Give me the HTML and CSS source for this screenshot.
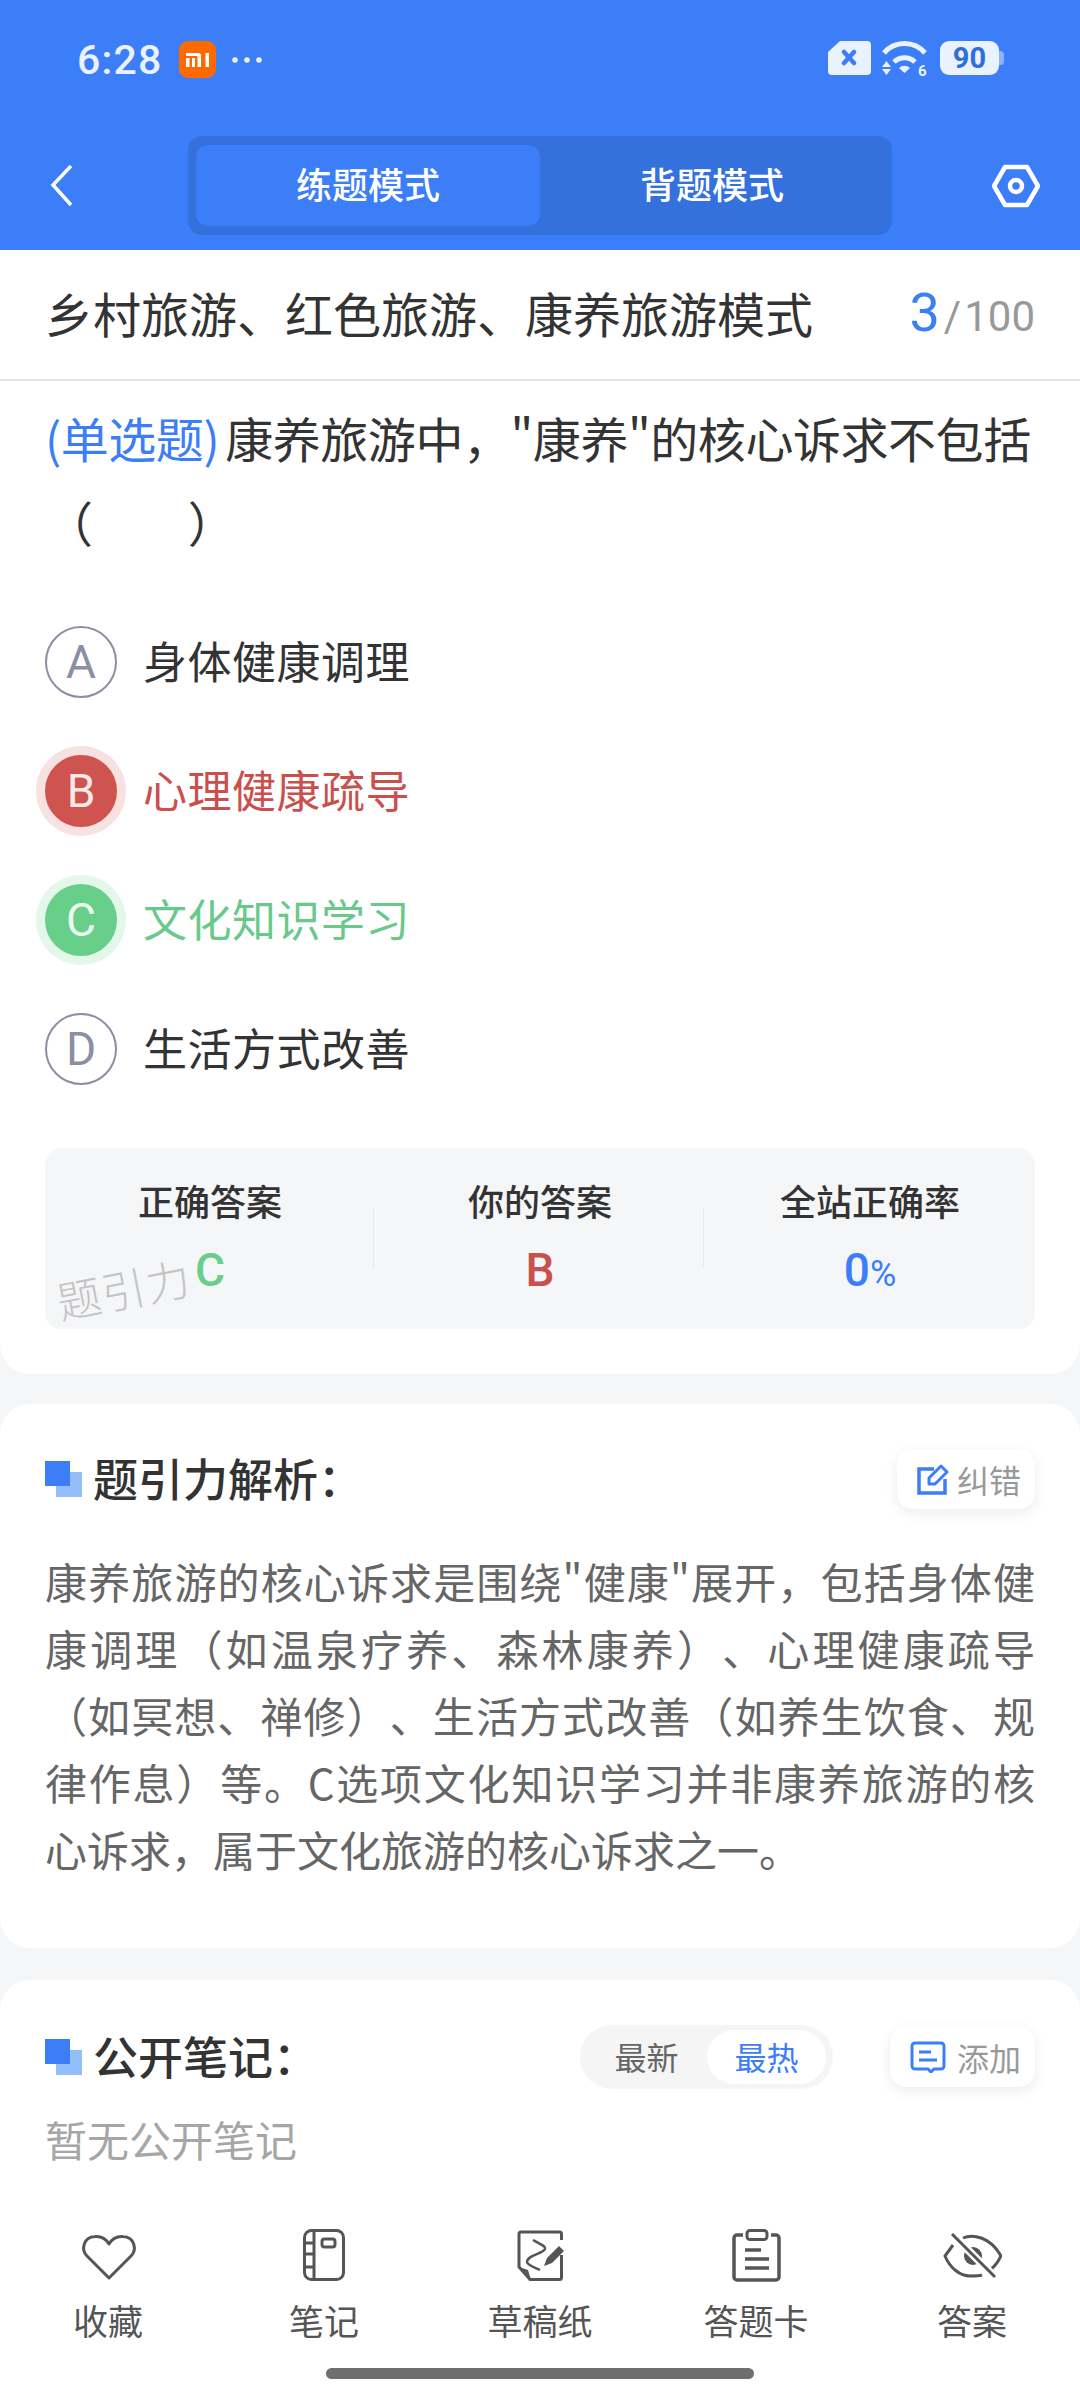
FILE: index.html
```html
<!DOCTYPE html>
<html lang="zh-CN">
<head>
    <meta charset="UTF-8">
    <meta name="viewport" content="width=device-width, initial-scale=1.0">
    <title>练题模式</title>
    <link rel="stylesheet" href="styles.css">
</head>
<body>
<div class="page">

    <!-- Blue header with status bar and mode tabs -->
    <header class="header">
        <div class="status-bar">
            <div class="status-left">
                <span class="time">6:28</span>
                <svg class="mi-icon" viewBox="0 0 37 37" width="37" height="37">
                    <rect width="37" height="37" rx="9" fill="#ff6a00"/>
                    <path d="M7 12h12a3 3 0 0 1 3 3v11h-3.500V16a1 1 0 0 0-1-1H7zM7 17h3.500v9H7zM13 17h3v9h-3zM26.500 12H30v14h-3.500z" fill="#fff"/>
                </svg>
                <svg class="dots" viewBox="0 0 30 6" width="30" height="6">
                    <circle cx="3" cy="3" r="2.800" fill="#eaf1ff"/>
                    <circle cx="15" cy="3" r="2.800" fill="#eaf1ff"/>
                    <circle cx="27" cy="3" r="2.800" fill="#eaf1ff"/>
                </svg>
            </div>
            <div class="status-right">
                <svg viewBox="0 0 43 34" width="43" height="34">
                    <path d="M12 0h27a4 4 0 0 1 4 4v26a4 4 0 0 1-4 4H4a4 4 0 0 1-4-4V11z" fill="#eaf1ff"/>
                    <path d="M16 11l10 11M26 11L16 22" stroke="#3b7ef8" stroke-width="4.500" stroke-linecap="round"/>
                </svg>
                <svg class="wifi" viewBox="0 0 47 35" width="47" height="35">
                    <path d="M2 12a27 27 0 0 1 41 0" fill="none" stroke="#eaf1ff" stroke-width="5"/>
                    <path d="M12 21a15 15 0 0 1 21 0" fill="none" stroke="#eaf1ff" stroke-width="5"/>
                    <path d="M17 27a8 8 0 0 1 11 0l-5.500 5z" fill="#eaf1ff"/>
                    <path d="M4.500 20l4.500 6H0zM0 28h9l-4.500 6z" fill="#eaf1ff"/>
                    <text x="36" y="35" class="wifi-six">6</text>
                </svg>
                <div class="battery">
                    <span class="battery-level">90</span>
                    <span class="battery-tip"></span>
                </div>
            </div>
        </div>
        <div class="tab-row">
            <svg class="back" viewBox="0 0 24 44" width="24" height="44">
                <path d="M21 2L3 21l18 20" fill="none" stroke="#fff" stroke-width="3.500"/>
            </svg>
            <div class="mode-tabs">
                <div class="mode-tab active">练题模式</div>
                <div class="mode-tab">背题模式</div>
            </div>
            <svg class="settings" viewBox="0 0 48 44" width="48" height="44">
                <path d="M13 3h22l11 19-11 19H13L2 22z" fill="none" stroke="#fff" stroke-width="4.500" stroke-linejoin="round"/>
                <circle cx="24" cy="22" r="6" fill="none" stroke="#fff" stroke-width="4.500"/>
            </svg>
        </div>
    </header>

    <!-- Question card -->
    <section class="card question-card">
        <div class="chapter">
            <div class="chapter-name">乡村旅游、红色旅游、康养旅游模式</div>
            <div class="progress"><span class="progress-now">3</span><span class="progress-sep">/</span>100</div>
        </div>
        <div class="question-body">
            <p class="question"><span class="question-type">(单选题)</span>康养旅游中，"康养"的核心诉求不包括（&emsp;&emsp;）</p>
            <div class="options">
                <div class="option">
                    <span class="option-mark">A</span>
                    <span class="option-text">身体健康调理</span>
                </div>
                <div class="option wrong">
                    <span class="option-mark">B</span>
                    <span class="option-text">心理健康疏导</span>
                </div>
                <div class="option right">
                    <span class="option-mark">C</span>
                    <span class="option-text">文化知识学习</span>
                </div>
                <div class="option">
                    <span class="option-mark">D</span>
                    <span class="option-text">生活方式改善</span>
                </div>
            </div>
            <div class="answer-panel">
                <div class="answer-col">
                    <div class="answer-label">正确答案</div>
                    <div class="answer-value green">C</div>
                </div>
                <div class="answer-col">
                    <div class="answer-label">你的答案</div>
                    <div class="answer-value red">B</div>
                </div>
                <div class="answer-col">
                    <div class="answer-label">全站正确率</div>
                    <div class="answer-value blue">0<small>%</small></div>
                </div>
                <div class="watermark">题引力</div>
            </div>
        </div>
    </section>

    <!-- Explanation card -->
    <section class="card analysis-card">
        <div class="section-head">
            <span class="section-icon"></span>
            <h2 class="section-title">题引力解析：</h2>
            <div class="tool-btn">
                <svg viewBox="0 0 32 32" width="32" height="32">
                    <path d="M17 6H2v24h26V16" fill="none" stroke="#3b7ef8" stroke-width="3.500"/>
                    <path d="M12 21v-6L24 3l6 6-12 12z" fill="none" stroke="#3b7ef8" stroke-width="3" stroke-linejoin="round"/>
                </svg>
                <span>纠错</span>
            </div>
        </div>
        <p class="analysis-text">康养旅游的核心诉求是围绕"健康"展开，包括身体健康调理（如温泉疗养、森林康养）、心理健康疏导（如冥想、禅修）、生活方式改善（如养生饮食、规律作息）等。C选项文化知识学习并非康养旅游的核心诉求，属于文化旅游的核心诉求之一。</p>
    </section>

    <!-- Public notes card -->
    <section class="card notes-card">
        <div class="section-head">
            <span class="section-icon"></span>
            <h2 class="section-title">公开笔记：</h2>
            <div class="sort-switch">
                <span class="sort-item">最新</span>
                <span class="sort-item active">最热</span>
            </div>
            <div class="tool-btn add">
                <svg viewBox="0 0 36 32" width="36" height="32">
                    <path d="M5 2h26a3 3 0 0 1 3 3v20a3 3 0 0 1-3 3h-7l-3 3-3-3H5a3 3 0 0 1-3-3V5a3 3 0 0 1 3-3z" fill="none" stroke="#3b7ef8" stroke-width="3"/>
                    <path d="M9 11h12M9 19h18" stroke="#3b7ef8" stroke-width="3"/>
                </svg>
                <span>添加</span>
            </div>
        </div>
        <p class="empty-text">暂无公开笔记</p>
    </section>

    <!-- Bottom toolbar -->
    <nav class="toolbar">
        <div class="tool">
            <svg viewBox="0 0 60 56" width="60" height="56">
                <path d="M31 50L9 28C3 22 5 9 17 8.500C23 8 28 11 31 16C34 11 39 8 45 8.500C57 9 59 22 53 28z" fill="none" stroke="#555" stroke-width="3" stroke-linejoin="round"/>
            </svg>
            <span>收藏</span>
        </div>
        <div class="tool">
            <svg viewBox="0 0 60 56" width="60" height="56">
                <rect x="10.500" y="2.500" width="39" height="49" rx="7" fill="none" stroke="#555" stroke-width="3"/>
                <path d="M20 2.500v49M10.500 15H20M10.500 26H20M10.500 39H20" fill="none" stroke="#555" stroke-width="3"/>
                <rect x="28" y="11" width="13" height="8" rx="2.500" fill="none" stroke="#555" stroke-width="3"/>
            </svg>
            <span>笔记</span>
        </div>
        <div class="tool">
            <svg viewBox="0 0 60 56" width="60" height="56">
                <path d="M51.500 12V6a2 2 0 0 0-2-2H11a2 2 0 0 0-2 2v33l11 12.500h29.500a2 2 0 0 0 2-2V27" fill="none" stroke="#555" stroke-width="3"/>
                <path d="M9 39l9 3 3 10z" fill="#555"/>
                <path d="M23 12C30 16 36 18 35 21C33 26 17 27 17 34C17 37 24 39 30 42" fill="none" stroke="#555" stroke-width="2.500"/>
                <path d="M34 38l3-8 12-12 5 5-12 12z" fill="#555"/>
            </svg>
            <span>草稿纸</span>
        </div>
        <div class="tool">
            <svg viewBox="0 0 60 56" width="60" height="56">
                <path d="M17 7h-6a3 3 0 0 0-3 3v39a3 3 0 0 0 3 3h39a3 3 0 0 0 3-3V10a3 3 0 0 0-3-3h-5" fill="none" stroke="#555" stroke-width="3.500"/>
                <rect x="21" y="2.500" width="20" height="9" rx="3" fill="none" stroke="#555" stroke-width="3"/>
                <path d="M19 22h16M19 31h24M19 40h24" stroke="#555" stroke-width="3.500"/>
            </svg>
            <span>答题卡</span>
        </div>
        <div class="tool">
            <svg viewBox="0 0 60 56" width="60" height="56">
                <path d="M21 10C30 6 48 8 59 28C57 32 54 38 48 42" fill="none" stroke="#555" stroke-width="3"/>
                <path d="M11 17L3 28C8 40 18 48 28 48C33 48 37 48 40 47" fill="none" stroke="#555" stroke-width="3"/>
                <circle cx="31" cy="28" r="9" fill="#555"/>
                <path d="M10 6l43 43" stroke="#fff" stroke-width="8"/>
                <path d="M10 6l43 43" stroke="#555" stroke-width="3"/>
            </svg>
            <span>答案</span>
        </div>
    </nav>
    <div class="home-bar"></div>

</div>
</body>
</html>
```

FILE: styles.css
```css
* {
    box-sizing: border-box;
}
body {
    margin: 0;
    font-family: "Noto Sans CJK SC", Roboto, sans-serif;
    color: #333;
    text-spacing-trim: space-all;
}
p, h2 {
    margin: 0;
}
.page {
    width: 1080px;
    height: 2400px;
    overflow: hidden;
    background-color: #f5f6f8;
    display: flex;
    flex-direction: column;
}

/* header */
.header {
    height: 250px;
    background-color: #3b7ef8;
    flex-shrink: 0;
}
.status-bar {
    height: 136px;
    padding: 41px 76px 0 77px;
    display: flex;
    justify-content: space-between;
    align-items: flex-start;
}
.status-left {
    display: flex;
    align-items: center;
    gap: 16px;
    height: 37px;
}
.time {
    font-family: Roboto, sans-serif;
    font-size: 41px;
    font-weight: 500;
    letter-spacing: 1.200px;
    color: #eaf1ff;
}
.status-right {
    display: flex;
    gap: 11px;
    align-items: flex-start;
}
.wifi {
    overflow: visible;
}
.wifi-six {
    font-family: Roboto, sans-serif;
    font-size: 15px;
    font-weight: 700;
    fill: #eaf1ff;
}
.battery {
    display: flex;
    align-items: center;
}
.battery-level {
    width: 59px;
    height: 34px;
    border-radius: 9px;
    background-color: #eaf1ff;
    color: #2f6fdc;
    font-family: Roboto, sans-serif;
    font-size: 29px;
    font-weight: 700;
    line-height: 34px;
    text-align: center;
}
.battery-tip {
    width: 5px;
    height: 14px;
    border-radius: 0 4px 4px 0;
    background-color: #8db4fa;
}
.tab-row {
    height: 99px;
    display: flex;
    align-items: center;
    padding-left: 50px;
}
.back {
    flex-shrink: 0;
}
.mode-tabs {
    width: 704px;
    height: 99px;
    margin-left: 114px;
    padding: 9px 8px;
    border-radius: 14px;
    background-color: #3571dd;
    display: flex;
}
.mode-tab {
    width: 344px;
    padding-bottom: 5px;
    border-radius: 12px;
    color: #fff;
    font-size: 36px;
    font-weight: 500;
    display: flex;
    align-items: center;
    justify-content: center;
}
.mode-tab.active {
    background-color: #3b7ef8;
}
.settings {
    margin-left: 100px;
    flex-shrink: 0;
}

/* cards */
.card {
    background-color: #fff;
    flex-shrink: 0;
}
.question-card {
    height: 1124px;
    border-radius: 0 0 30px 30px;
}
.chapter {
    height: 131px;
    padding: 0 45px 5px 45px;
    border-bottom: 2px solid #e4e4e4;
    display: flex;
    align-items: center;
    justify-content: space-between;
}
.chapter-name {
    font-size: 48px;
}
.progress {
    font-family: Roboto, sans-serif;
    font-size: 42px;
    color: #999;
    display: flex;
    align-items: baseline;
}
.progress-now {
    font-size: 54px;
    color: #3b7ef8;
}
.progress-sep {
    margin: 0 3px 0 4px;
}
.question-body {
    padding: 14px 45px 0;
}
.question {
    font-size: 48px;
    line-height: 84px;
    letter-spacing: -0.45px;
}
.question-type {
    color: #3b7ef8;
    margin-right: 6px;
}
.options {
    margin-top: 63px;
    display: flex;
    flex-direction: column;
    gap: 57px;
}
.option {
    height: 72px;
    display: flex;
    align-items: center;
    gap: 26px;
}
.option-mark {
    width: 72px;
    height: 72px;
    flex-shrink: 0;
    border: 2px solid #8a8fa3;
    border-radius: 50%;
    color: #8a8fa3;
    font-family: Roboto, sans-serif;
    font-size: 46px;
    font-weight: 400;
    display: flex;
    align-items: center;
    justify-content: center;
}
.option-text {
    padding-bottom: 5px;
    font-size: 44px;
    letter-spacing: 0.5px;
}
.wrong .option-mark {
    background-color: #cf534e;
    border-color: #cf534e;
    color: #fbe9e9;
    box-shadow: 0 0 0 9px #f7e1e1;
}
.wrong .option-text {
    color: #c9504c;
}
.right .option-mark {
    background-color: #68cf8a;
    border-color: #68cf8a;
    color: #eafaf0;
    box-shadow: 0 0 0 9px #e3f7eb;
}
.right .option-text {
    color: #68c98a;
}
.answer-panel {
    position: relative;
    height: 181px;
    margin-top: 63px;
    border-radius: 16px;
    background-color: #f5f6f8;
    display: flex;
}
.answer-col {
    flex: 1;
    padding-top: 25px;
    text-align: center;
    position: relative;
}
.answer-col + .answer-col::before {
    content: "";
    position: absolute;
    left: -2px;
    top: 60px;
    height: 60px;
    width: 1px;
    background-color: #e8e9ec;
}
.answer-label {
    font-size: 36px;
    font-weight: 500;
    line-height: 54px;
}
.answer-value {
    margin-top: 15px;
    font-family: Roboto, sans-serif;
    font-size: 46px;
    font-weight: 500;
    line-height: 56px;
}
.answer-value small {
    font-size: 36px;
    font-weight: 400;
}
.green {
    color: #68cf8a;
}
.red {
    color: #c9504c;
}
.blue {
    color: #3b7ef8;
}
.watermark {
    position: absolute;
    left: 11px;
    top: 110px;
    font-size: 44px;
    font-weight: 300;
    line-height: 60px;
    color: #c4c4c4;
    transform: rotate(-11deg);
    letter-spacing: 1px;
}
.analysis-card {
    height: 544px;
    margin-top: 30px;
    padding: 45px 45px 0;
    border-radius: 30px;
}
.section-head {
    height: 60px;
    display: flex;
    align-items: center;
}
.section-icon {
    position: relative;
    width: 37px;
    height: 36px;
    flex-shrink: 0;
    margin-right: 11px;
}
.section-icon::before {
    content: "";
    position: absolute;
    right: 0;
    bottom: 0;
    width: 26px;
    height: 25px;
    background-color: #93bdfb;
}
.section-icon::after {
    content: "";
    position: absolute;
    left: 0;
    top: 0;
    width: 25px;
    height: 25px;
    background-color: #3b7ef8;
}
.section-title {
    padding-bottom: 3px;
    font-size: 45px;
    font-weight: 500;
    flex: 1;
}
.tool-btn {
    height: 60px;
    padding: 0 14px 0 20px;
    border-radius: 16px;
    background-color: #fff;
    box-shadow: 0 4px 14px rgba(0, 0, 0, 0.08);
    color: #999;
    font-size: 32px;
    display: flex;
    align-items: center;
    gap: 8px;
}
.tool-btn.add {
    gap: 11px;
}
.analysis-text {
    margin-top: 38px;
    font-size: 42px;
    line-height: 67px;
    color: #666;
    text-align: justify;
}
.notes-card {
    flex: 1;
    margin-top: 32px;
    padding: 47px 45px 0;
    border-radius: 30px 30px 0 0;
}
.sort-switch {
    width: 253px;
    height: 64px;
    margin-right: 57px;
    padding: 5px 7px 5px 6px;
    border-radius: 32px;
    background-color: #f5f5f5;
    color: #666;
    font-size: 32px;
    display: flex;
    align-items: center;
}
.sort-item {
    flex: 1;
    height: 54px;
    line-height: 52px;
    text-align: center;
    border-radius: 27px;
}
.sort-item.active {
    flex: 0 0 119px;
    background-color: #fff;
    color: #3b7ef8;
}
.empty-text {
    margin-top: 23px;
    font-size: 42px;
    line-height: 58px;
    color: #a6a6a6;
}

/* bottom toolbar */
.toolbar {
    flex-shrink: 0;
    height: 158px;
    background-color: #fff;
    display: grid;
    grid-template-columns: repeat(5, 216px);
    padding-top: 18px;
}
.tool {
    display: flex;
    flex-direction: column;
    align-items: center;
    font-size: 35px;
    line-height: 50px;
    color: #555;
    gap: 11px;
}
.home-bar {
    flex-shrink: 0;
    height: 32px;
    background-color: #fff;
    position: relative;
}
.home-bar::after {
    content: "";
    position: absolute;
    left: 326px;
    top: 0;
    width: 428px;
    height: 11px;
    border-radius: 6px;
    background-color: #6e6e6e;
}
```
